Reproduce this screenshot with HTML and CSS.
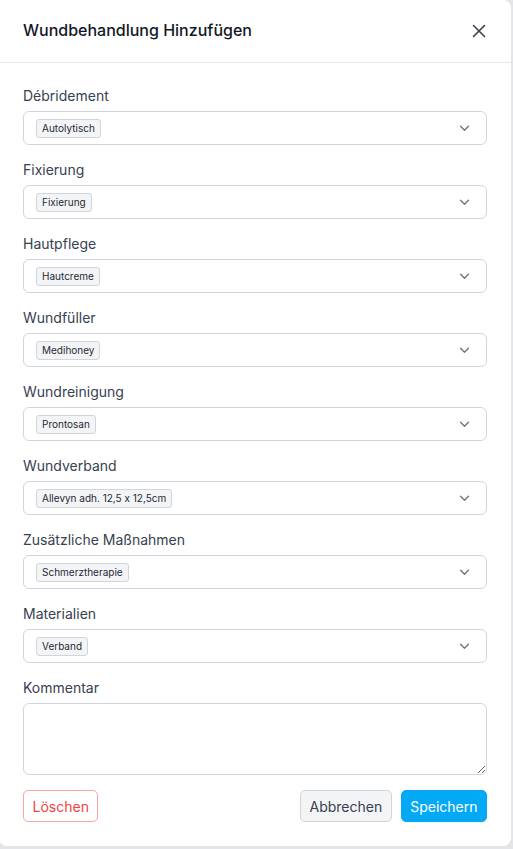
FILE: index.html
```html
<!DOCTYPE html>
<html lang="de">
<head>
<meta charset="utf-8">
<link rel="stylesheet" href="styles.css">
</head>
<body>
<div class="modal">
  <div class="modal-header">
    <h2 class="modal-title">Wundbehandlung Hinzufügen</h2>
    <button class="close-btn" aria-label="Schließen">
      <svg width="14" height="14" viewBox="0 0 14 14"><path d="M1.5 1.5 L12.5 12.5 M12.5 1.5 L1.5 12.5" stroke="#374151" stroke-width="1.6" stroke-linecap="round" fill="none"/></svg>
    </button>
  </div>
  <div class="modal-body">
    <div class="field">
      <label class="label">Débridement</label>
      <div class="select"><span class="tag">Autolytisch</span><svg class="chev" viewBox="0 0 12 8"><path d="M1.5 1.5 L6 6 L10.5 1.5" /></svg></div>
    </div>
    <div class="field">
      <label class="label">Fixierung</label>
      <div class="select"><span class="tag">Fixierung</span><svg class="chev" viewBox="0 0 12 8"><path d="M1.5 1.5 L6 6 L10.5 1.5" /></svg></div>
    </div>
    <div class="field">
      <label class="label">Hautpflege</label>
      <div class="select"><span class="tag">Hautcreme</span><svg class="chev" viewBox="0 0 12 8"><path d="M1.5 1.5 L6 6 L10.5 1.5" /></svg></div>
    </div>
    <div class="field">
      <label class="label">Wundfüller</label>
      <div class="select"><span class="tag">Medihoney</span><svg class="chev" viewBox="0 0 12 8"><path d="M1.5 1.5 L6 6 L10.5 1.5" /></svg></div>
    </div>
    <div class="field">
      <label class="label">Wundreinigung</label>
      <div class="select"><span class="tag">Prontosan</span><svg class="chev" viewBox="0 0 12 8"><path d="M1.5 1.5 L6 6 L10.5 1.5" /></svg></div>
    </div>
    <div class="field">
      <label class="label">Wundverband</label>
      <div class="select"><span class="tag">Allevyn adh. 12,5 x 12,5cm</span><svg class="chev" viewBox="0 0 12 8"><path d="M1.5 1.5 L6 6 L10.5 1.5" /></svg></div>
    </div>
    <div class="field">
      <label class="label">Zusätzliche Maßnahmen</label>
      <div class="select"><span class="tag">Schmerztherapie</span><svg class="chev" viewBox="0 0 12 8"><path d="M1.5 1.5 L6 6 L10.5 1.5" /></svg></div>
    </div>
    <div class="field">
      <label class="label">Materialien</label>
      <div class="select"><span class="tag">Verband</span><svg class="chev" viewBox="0 0 12 8"><path d="M1.5 1.5 L6 6 L10.5 1.5" /></svg></div>
    </div>
    <div class="field">
      <label class="label">Kommentar</label>
      <textarea class="textarea"></textarea>
    </div>
    <div class="actions">
      <button class="btn btn-danger">Löschen</button>
      <div class="actions-right">
        <button class="btn btn-secondary">Abbrechen</button>
        <button class="btn btn-primary">Speichern</button>
      </div>
    </div>
  </div>
</div>
</body>
</html>
```
FILE: styles.css
```css
* { box-sizing: border-box; }
html, body { margin: 0; padding: 0; }
body {
  background: #e4e5e8;
  font-family: Inter, "Noto Sans", sans-serif;
  font-feature-settings: "calt" 0;
  width: 513px;
  height: 849px;
  overflow: hidden;
}
.modal {
  width: 512px;
  margin-left: -1px;
  background: #fff;
  border-radius: 0 8px 8px 8px;
}
.modal-header {
  height: 63px;
  border-bottom: 1px solid #e5e7eb;
  display: flex;
  align-items: center;
  justify-content: space-between;
  padding: 0 24px;
}
.modal-title {
  margin: 0;
  font-size: 16px;
  font-weight: 500;
  color: #111827;
  padding-bottom: 2px;
}
.close-btn {
  background: none;
  border: 0;
  padding: 0;
  margin-right: 1px;
  width: 14px;
  height: 14px;
  display: flex;
  cursor: pointer;
}
.modal-body {
  padding: 23px 24px 24px;
  display: flex;
  flex-direction: column;
}
.field {
  display: flex;
  flex-direction: column;
  margin-bottom: 15px;
}
.label {
  font-size: 14px;
  line-height: 20px;
  color: #374151;
  margin-bottom: 5px;
}
.select {
  height: 34px;
  border: 1px solid #d1d5db;
  border-radius: 6px;
  display: flex;
  align-items: center;
  padding: 0 16px 0 12px;
  justify-content: space-between;
}
.tag {
  font-size: 10px;
  line-height: 17px;
  padding: 0 5px;
  background: #f3f4f6;
  border: 1px solid #d1d5db;
  border-radius: 3px;
  color: #1f2937;
  font-feature-settings: "calt" 0;
}
.chev {
  width: 11px;
  height: 7px;
  fill: none;
  stroke: #6b7280;
  stroke-width: 1.5;
  stroke-linecap: round;
  stroke-linejoin: round;
}
.textarea {
  height: 72px;
  border: 1px solid #d1d5db;
  border-radius: 6px;
  resize: vertical;
  font-family: inherit;
  display: block;
}
.field:last-of-type { margin-bottom: 16px; }
.actions {
  display: flex;
  justify-content: space-between;
  align-items: center;
}
.actions-right {
  display: flex;
  gap: 9px;
}
.btn {
  height: 32px;
  font-family: inherit;
  font-size: 14px;
  font-weight: 400;
  border-radius: 5px;
  padding: 0 8.5px;
  cursor: pointer;
}
.btn-danger {
  background: #fff;
  border: 1px solid #fca5a5;
  color: #ef4444;
}
.btn-secondary {
  background: #f3f4f6;
  border: 1px solid #d1d5db;
  color: #374151;
}
.btn-primary {
  background: #03a9f4;
  border: 1px solid #03a9f4;
  color: #fff;
}
```
